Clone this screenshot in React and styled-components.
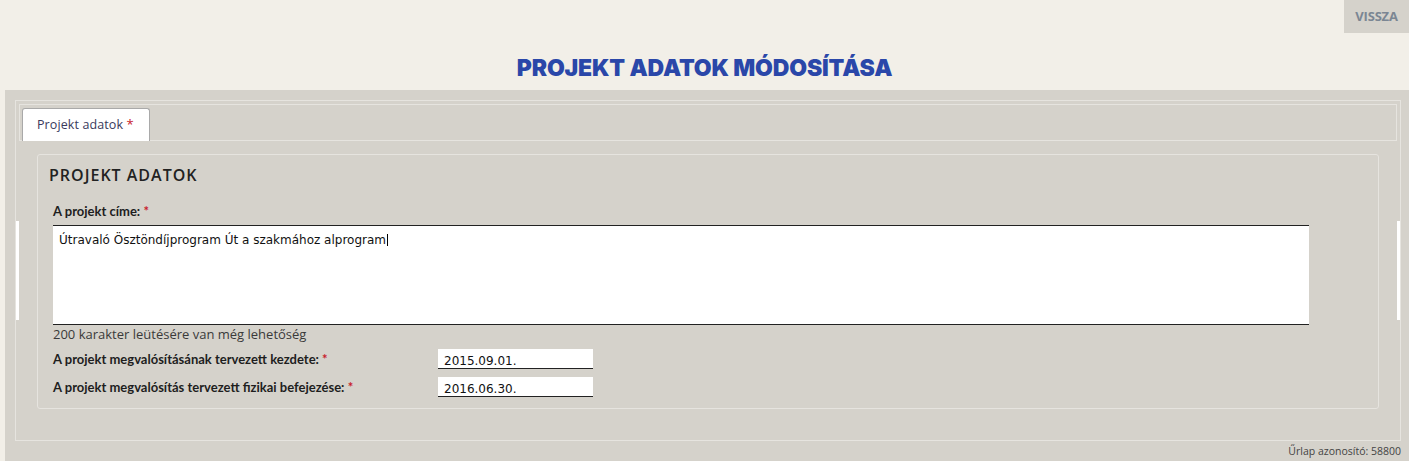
import styled, { createGlobalStyle } from "styled-components";

// ─── Global ────────────────────────────────────────────────────────────────
const GlobalStyle = createGlobalStyle`
    html, body {
        margin: 0;
        padding: 0;
        background: #f2efe8;
        font-family: "Open Sans", "Liberation Sans", sans-serif;
    }
    * { box-sizing: border-box; }
`;

// ─── Header ────────────────────────────────────────────────────────────────
const Header = styled.header`
    height: 90px;
    display: flex;
    flex-direction: column;
`;

const TopBar = styled.div`
    display: flex;
    justify-content: flex-end;
`;

const BackButton = styled.button`
    width: 65px;
    height: 33px;
    border: none;
    background: #d5d2cb;
    color: #7b8693;
    font-family: "Open Sans", sans-serif;
    font-weight: 700;
    font-size: 13px;
    letter-spacing: -0.2px;
    padding: 0 0 2px;
    cursor: pointer;
`;

const Title = styled.h1`
    margin: 21px 0 0;
    text-align: center;
    font-family: Inter, "DejaVu Sans", sans-serif;
    font-weight: 900;
    font-size: 23px;
    line-height: 28px;
    letter-spacing: -0.15px;
    color: #2a47a9;
`;

// ─── Panel ─────────────────────────────────────────────────────────────────
const Panel = styled.main`
    margin-left: 5px;
    min-height: 371px;
    background: #d5d2cb;
    padding: 10px 8px 0 10px;
`;

const OuterBox = styled.div`
    position: relative;
    border: 1px solid #e6e4df;
    padding: 3px;
`;

const SideHandle = styled.span`
    position: absolute;
    top: 120px;
    ${(p) => (p.$side === "left" ? "left: 0;" : "right: 0;")}
    width: 3px;
    height: 99px;
    background: #ffffff;
`;

const TabBar = styled.div`
    display: flex;
    border: 1px solid #e6e4df;
    padding: 3px 0 0 2px;
`;

const Tab = styled.div`
    position: relative;
    z-index: 1;
    width: 128px;
    height: 33px;
    margin-bottom: -1px;
    background: #ffffff;
    border: 1px solid #a9a9a9;
    border-bottom: none;
    border-radius: 3px 3px 0 0;
    padding-left: 14px;
    font-size: 12.5px;
    line-height: 31px;
    letter-spacing: 0.1px;
    color: #3a3a5c;
`;

const Req = styled.span`
    color: #c8202b;
    font-size: 13px;
`;

const Section = styled.section`
    margin: 13px 18px 28px 18px;
    border: 1px solid #e6e4df;
    border-radius: 3px;
    padding: 10px 15px 11px 15px;
`;

const SectionTitle = styled.h2`
    margin: 0 0 18px -4px;
    font-family: "Open Sans", sans-serif;
    font-weight: 600;
    font-size: 16px;
    line-height: 20px;
    letter-spacing: 1px;
    color: #222;
`;

const Label = styled.label`
    display: block;
    font-family: Lato, "Liberation Sans", sans-serif;
    font-weight: 700;
    font-size: 13px;
    line-height: 16px;
    color: #1e1e1e;
`;

const TextBox = styled.div`
    margin-top: 6px;
    width: 1256px;
    height: 100px;
    background: #ffffff;
    border-top: 1px solid #222;
    border-bottom: 1px solid #222;
    padding: 6px 6px;
    font-family: "DejaVu Sans", Verdana, sans-serif;
    font-size: 12px;
    line-height: 16px;
    color: #111;
`;

const Caret = styled.span`
    display: inline-block;
    width: 1px;
    height: 12px;
    margin-left: 1px;
    vertical-align: -2px;
    background: #000;
`;

const Counter = styled.p`
    margin: 0 0 6px;
    font-size: 13px;
    line-height: 18px;
    color: #3a3a3a;
`;

const FieldList = styled.div`
    display: flex;
    flex-direction: column;
    gap: 8px;
`;

const FieldRow = styled.div`
    display: flex;
    align-items: flex-start;
    height: 20px;
`;

const RowLabel = styled(Label)`
    width: 385px;
    flex-shrink: 0;
    padding-top: 2px;
`;

const DateInput = styled.div`
    width: 155px;
    height: 20px;
    background: #ffffff;
    border-bottom: 1px solid #222;
    padding: 6px 0 0 6px;
    font-family: "DejaVu Sans", Verdana, sans-serif;
    font-size: 12px;
    line-height: 13px;
    color: #111;
`;

const Footer = styled.div`
    text-align: right;
    padding-top: 3px;
    font-size: 10.5px;
    line-height: 14px;
    color: #444;
`;

// ─── App ───────────────────────────────────────────────────────────────────
const dates = [
    { label: "A projekt megvalósításának tervezett kezdete:", value: "2015.09.01." },
    { label: "A projekt megvalósítás tervezett fizikai befejezése:", value: "2016.06.30." },
];

export default function App() {
    return (
        <>
            <GlobalStyle />
            <Header>
                <TopBar>
                    <BackButton>VISSZA</BackButton>
                </TopBar>
                <Title>PROJEKT ADATOK MÓDOSÍTÁSA</Title>
            </Header>
            <Panel>
                <OuterBox>
                    <SideHandle $side="left" />
                    <SideHandle $side="right" />
                    <TabBar>
                        <Tab>
                            Projekt adatok <Req>*</Req>
                        </Tab>
                    </TabBar>
                    <Section>
                        <SectionTitle>PROJEKT ADATOK</SectionTitle>
                        <Label>
                            A projekt címe: <Req>*</Req>
                        </Label>
                        <TextBox>
                            Útravaló Ösztöndíjprogram Út a szakmához alprogram
                            <Caret />
                        </TextBox>
                        <Counter>200 karakter leütésére van még lehetőség</Counter>
                        <FieldList>
                            {dates.map((d) => (
                                <FieldRow key={d.label}>
                                    <RowLabel>
                                        {d.label} <Req>*</Req>
                                    </RowLabel>
                                    <DateInput>{d.value}</DateInput>
                                </FieldRow>
                            ))}
                        </FieldList>
                    </Section>
                </OuterBox>
                <Footer>Űrlap azonosító: 58800</Footer>
            </Panel>
        </>
    );
}
